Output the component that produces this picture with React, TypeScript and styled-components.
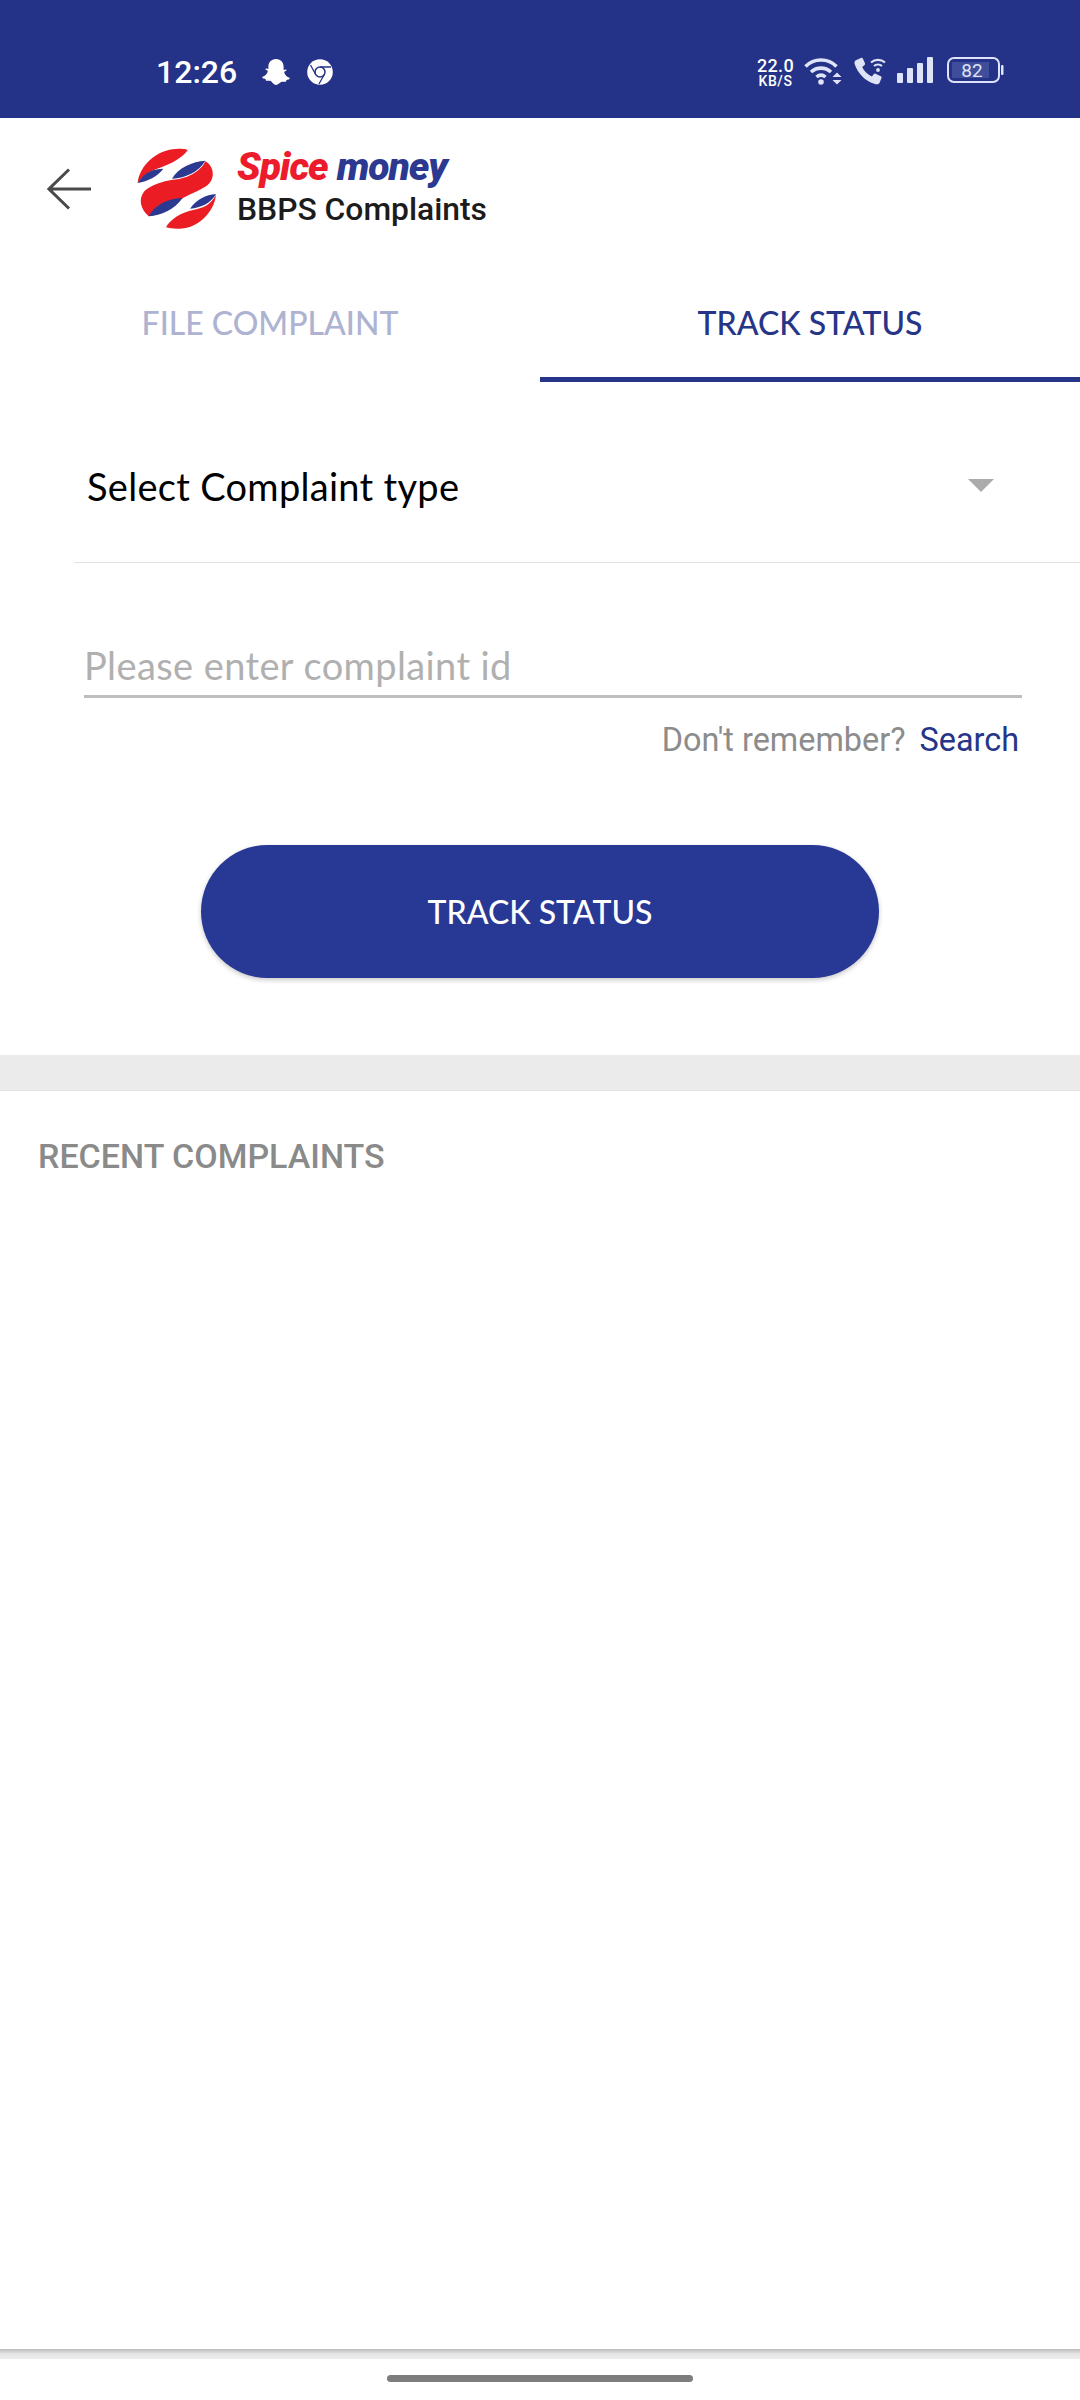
import React from "react";
import styled, { createGlobalStyle } from "styled-components";

const Global = createGlobalStyle`
  html, body { margin: 0; padding: 0; background: #fff; }
  * { box-sizing: border-box; }
`;
const Page = styled.div`
  width: 1080px; height: 2400px; display: flex; flex-direction: column; overflow: hidden; background: #fff;
  font-family: "Roboto", "Liberation Sans", sans-serif;
`;
const StatusBar = styled.div`
  height: 118px; flex: none; background: #243387; display: flex; align-items: flex-start; padding: 56px 76px 0 156px;
  color: #fff;
`;
const Time = styled.span`
  font-family: "Roboto", sans-serif; font-weight: 500; font-size: 32px; line-height: 32px; width: 106px;
`;
const LeftIcons = styled.div`
  display: flex; gap: 17px; align-items: center; height: 32px;
`;
const Spacer = styled.div`flex: 1;`;
const RightIcons = styled.div`
  display: flex; align-items: flex-start; color: #dfe3f7; margin-top: 1px;
`;
const Speed = styled.div`
  display: flex; flex-direction: column; align-items: center; width: 41px; margin-right: 8px; color: #fff; font-family: "Roboto", sans-serif; font-weight: 500;
`;
const SpeedValue = styled.span`font-size: 18px; line-height: 18px; letter-spacing: .3px;`;
const SpeedUnit = styled.span`font-size: 14px; line-height: 13px; letter-spacing: .6px;`;
const StatusIcon = styled.svg<{ $gap?: number }>`
  display: block; flex: none; margin-right: ${p => p.$gap ?? 0}px;
`;
const Header = styled.header`
  height: 132px; flex: none; display: flex; align-items: flex-start; padding: 30px 0 0 47px;
`;
const BackIcon = styled.svg`
  display: block; margin: 20px 45px 0 0; flex: none;
`;
const Logo = styled.svg`display: block; flex: none; margin-right: 20px;`;
const Brand = styled.div`display: flex; flex-direction: column;`;
const BrandName = styled.div`
  font-family: "Roboto", sans-serif; font-weight: 900; font-style: italic; font-size: 39px; line-height: 38px; letter-spacing: -1px; white-space: nowrap; display: flex; gap: 9px;
`;
const BrandWord = styled.span<{ $color: string }>`color: ${p => p.$color};`;
const Subtitle = styled.div`
  font-family: "Roboto", sans-serif; font-weight: 500; font-size: 31.8px; line-height: 36px; color: #1c1c1c; margin-top: 5px; white-space: nowrap;
`;
const Tabs = styled.nav`
  display: grid; grid-template-columns: 1fr 1fr; flex: none;
`;
const Tab = styled.div<{ $active?: boolean }>`
  height: 132px; padding-top: 54px; text-align: center;
  font-family: "Lato", sans-serif; font-weight: 500; font-size: 32px; line-height: 38px;
  color: ${p => p.$active ? "#263587" : "#aeb3d2"};
  border-bottom: 5px solid ${p => p.$active ? "#263587" : "transparent"};
`;
const SelectRow = styled.div`
  height: 181px; flex: none; margin-left: 74px; padding: 0 86px 0 13px; display: flex; align-items: center; justify-content: space-between;
  border-bottom: 1px solid #e2e2e2;
`;
const SelectLabel = styled.span`
  font-family: "Lato", sans-serif; font-size: 38px; color: #000; letter-spacing: .3px; margin-top: 28px;
`;
const Caret = styled.span`
  width: 0; height: 0; border-left: 13px solid transparent; border-right: 13px solid transparent; border-top: 13px solid #ababab; margin-top: 26px;
`;
const Field = styled.div`
  margin: 80px 58px 0 84px; border-bottom: 3px solid #bdbdbd; flex: none; height: 55px;
`;
const FieldInput = styled.input`
  display: block; width: 100%; height: 44px; border: 0; outline: 0; padding: 0; background: transparent;
  font-family: "Lato", sans-serif; font-size: 38px; letter-spacing: .4px;
  &::placeholder { color: #b0b0b0; opacity: 1; }
`;
const HelpRow = styled.div`
  display: flex; justify-content: flex-end; gap: 14px; margin: 22px 61px 0 0; flex: none; font-size: 32.400px; line-height: 40px;
`;
const HelpText = styled.span`color: #8c8c8c;`;
const HelpLink = styled.span`color: #263587;`;
const Action = styled.div`
  display: flex; justify-content: center; margin-top: 85px; flex: none;
`;
const PrimaryButton = styled.button`
  width: 678px; height: 133px; border: 0; border-radius: 67px; background: #283895; color: #fff;
  font-family: "Lato", sans-serif; font-weight: 500; font-size: 32px; padding: 0;
  box-shadow: 0 2px 5px rgba(0,0,0,.22);
`;
const Band = styled.div`
  height: 36px; margin-top: 77px; flex: none; background: #ebebeb; border-bottom: 1px solid #e3e3e3;
`;
const SectionTitle = styled.h2`
  margin: 45px 0 0 38px; font-family: "Roboto", sans-serif; font-weight: 500; font-size: 34px; line-height: 40px; color: #8a8a8a; flex: none;
`;
const Bottom = styled.div`
  margin-top: auto; flex: none; height: 51px; display: flex; justify-content: center;
  background: linear-gradient(#bcbcbc 0, #e6e6e6 5px, #ececec 10px, #fff 10px);
`;
const HomePill = styled.div`
  width: 306px; height: 7px; border-radius: 4px; background: #7d7d7d; margin-top: 26px;
`;

const Snap = () => (
  <StatusIcon width="28" height="26" viewBox="0 0 28 26">
    <path fill="#fff" d="M14 0c5 0 7.600 3.800 7.600 7.500v3.200c1.300.1 2.700-.9 3 .2.300 1-1.800 1.600-2.500 2.100.6 3 3 5 5.300 5.800.9.400.4 1.300-.7 1.600-1 .3-2 .4-2.300.8-.3.500-.1 1.500-.8 1.600-1.400.2-2.800-.6-4.400.3C17.400 23.600 16.400 26 14 26s-3.400-2.400-5.200-3.900c-1.600-.9-3-.1-4.400-.3-.7-.1-.5-1.100-.8-1.600-.3-.4-1.300-.5-2.300-.8-1.100-.3-1.600-1.200-.7-1.600 2.300-.8 4.700-2.800 5.300-5.800-.7-.5-2.800-1.100-2.500-2.100.3-1.100 1.700-.1 3-.2V7.500C6.400 3.800 9 0 14 0z" />
  </StatusIcon>
);
const Chrome = () => (
  <StatusIcon width="26" height="26" viewBox="0 0 26 26">
    <circle cx="13" cy="13" r="12.800" fill="#fff" />
    <circle cx="13" cy="13" r="5" fill="#fff" stroke="#243387" strokeWidth="1.500" />
    <path d="M13 8h11M8.700 15.500 3.500 6M17.300 15.500 12 25" stroke="#243387" strokeWidth="1.300" fill="none" />
  </StatusIcon>
);
const Wifi = () => (
  <StatusIcon $gap={12} width="38" height="28" viewBox="0 0 38 28" fill="none" stroke="#dfe3f7" strokeWidth="3.600">
    <path d="M1.500 9.500C10 .8 24 .8 32.500 9.500" />
    <path d="M7 15c5.800-5.200 14.200-5.200 20 0" />
    <path d="M12.500 20c2.800-2.400 6.200-2.400 9 0" />
    <circle cx="17" cy="25" r="2.800" fill="#dfe3f7" stroke="none" />
    <path d="M28.500 20l4.500-4.500 4.500 4.500zM28.500 23l4.500 4.500 4.500-4.500z" fill="#dfe3f7" stroke="none" />
  </StatusIcon>
);
const Call = () => (
  <StatusIcon $gap={8} width="35" height="28" viewBox="0 0 35 28">
    <path fill="#dfe3f7" d="M7 1 1.800 3.200C.5 4 .2 5.500.800 7.500 4 16.500 11 24 21 27c2 .6 3.600.2 4.500-1l2-5c.2-.8 0-1.300-.7-1.700l-5.300-2.600c-.8-.3-1.300-.1-1.800.5l-1.800 2.300C13.500 17.800 10 14 8.200 10l2.400-2c.5-.5.600-1.100.4-1.700L8.800 1.500C8.500.9 7.800.7 7 1z" />
    <path d="M17 5.500c4-3.500 10-3.500 14 0M20 9c2.300-2 5.700-2 8 0" fill="none" stroke="#dfe3f7" strokeWidth="2.200" />
    <circle cx="24" cy="13" r="1.900" fill="#dfe3f7" />
  </StatusIcon>
);
const Signal = () => (
  <StatusIcon $gap={14} width="36" height="26" viewBox="0 0 36 26" fill="#dfe3f7">
    <rect x="0" y="16" width="6" height="10" rx="1" />
    <rect x="10" y="11" width="6" height="15" rx="1" />
    <rect x="20" y="6" width="6" height="20" rx="1" />
    <rect x="30" y="0" width="6" height="26" rx="1" />
  </StatusIcon>
);
const Battery = () => (
  <StatusIcon width="57" height="26" viewBox="0 0 57 26">
    <rect x="1" y="1" width="51" height="24" rx="6" fill="none" stroke="#dfe3f7" strokeWidth="2" />
    <rect x="5" y="5" width="37" height="16" fill="#3f4d9b" />
    <rect x="54" y="8" width="2.500" height="10" rx="1" fill="#dfe3f7" />
    <text x="25" y="19.500" textAnchor="middle" fontFamily="Roboto, sans-serif" fontSize="19" fill="#dfe3f7">82</text>
  </StatusIcon>
);

export default function App() {
  return (
    <Page>
      <Global />
      <StatusBar>
        <Time>12:26</Time>
        <LeftIcons>
          <Snap />
          <Chrome />
        </LeftIcons>
        <Spacer />
        <RightIcons>
          <Speed>
            <SpeedValue>22.0</SpeedValue>
            <SpeedUnit>KB/S</SpeedUnit>
          </Speed>
          <Wifi />
          <Call />
          <Signal />
          <Battery />
        </RightIcons>
      </StatusBar>
      <Header>
        <BackIcon width="45" height="42" viewBox="0 0 45 42" fill="none" stroke="#4a4a4a" strokeWidth="3">
          <path d="M44 21H2M22 1.500 2 21l20 19.500" />
        </BackIcon>
        <Logo width="80" height="82" viewBox="53 55 240 246">
          <path fill="#ec1c24" d="M55 160C60 110 110 60 170 58c20-2 35 2 35 4-15 23-55 43-85 53-30 10-50 25-65 45z" />
          <path fill="#2b3990" d="M55 160c20-35 50-42 77-43-17 23-47 38-77 43z" />
          <path fill="#2b3990" d="M158 147c17-32 62-52 100-54-18 32-58 52-100 54z" />
          <path fill="#ec1c24" d="M160 150c40 0 85-25 98-55 27 15 32 55 2 75-30 20-70 30-100 55-30 25-60 33-72 35-23-20-33-50-13-75 20-20 55-30 85-35z" />
          <path fill="#2b3990" d="M88 260c17-35 62-55 102-55-25 35-65 53-102 55z" />
          <path fill="#2b3990" d="M212 237c18-27 48-42 78-44-15 27-45 42-78 44z" />
          <path fill="#ec1c24" d="M140 293c10-23 50-48 85-53 25-5 50-15 65-45-5 55-60 105-115 102-15 0-25-2-35-4z" />
        </Logo>
        <Brand>
          <BrandName>
            <BrandWord $color="#ec1c2c">Spice</BrandWord>
            <BrandWord $color="#2b3990">money</BrandWord>
          </BrandName>
          <Subtitle>BBPS Complaints</Subtitle>
        </Brand>
      </Header>
      <Tabs>
        <Tab>FILE COMPLAINT</Tab>
        <Tab $active>TRACK STATUS</Tab>
      </Tabs>
      <SelectRow>
        <SelectLabel>Select Complaint type</SelectLabel>
        <Caret />
      </SelectRow>
      <Field>
        <FieldInput placeholder="Please enter complaint id" />
      </Field>
      <HelpRow>
        <HelpText>Don't remember?</HelpText>
        <HelpLink>Search</HelpLink>
      </HelpRow>
      <Action>
        <PrimaryButton>TRACK STATUS</PrimaryButton>
      </Action>
      <Band />
      <SectionTitle>RECENT COMPLAINTS</SectionTitle>
      <Bottom>
        <HomePill />
      </Bottom>
    </Page>
  );
}
